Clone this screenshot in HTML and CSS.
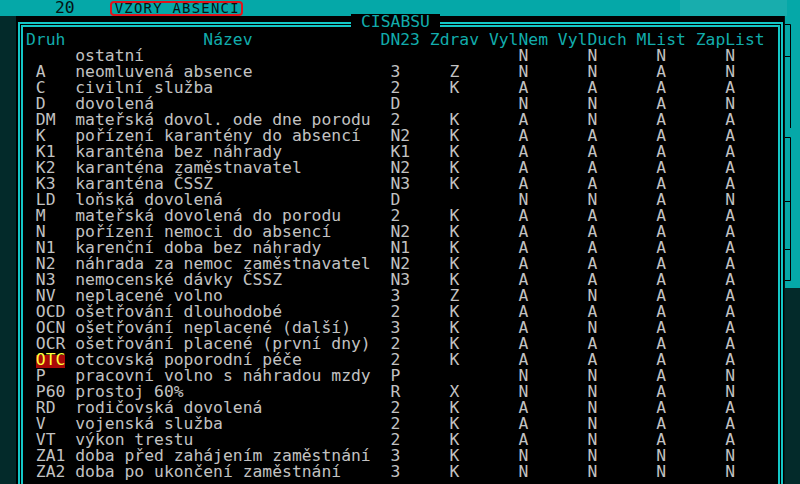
FILE: index.html
```html
<!DOCTYPE html>
<html lang="cs">
<head>
<meta charset="utf-8">
<title>VZORY ABSENCI</title>
<link rel="stylesheet" href="styles.css">
</head>
<body>
<div class="screen">
  <div class="topbar">
    <span class="num">20</span>
    <span class="title">VZORY ABSENCI</span>
    <span class="glare"></span>
  </div>
  <div class="main">
    <div class="leftstrip"></div>
    <div class="window">
      <div class="frame-outer">
        <div class="caption">CISABSU</div>
        <div class="frame-inner">
          <div class="head">
            <span>Druh</span><span>Název</span><span>DN23</span><span>Zdrav</span><span>VylNem</span><span>VylDuch</span><span>MList</span><span>ZapList</span>
          </div>
          <div class="row"><span></span><span></span><span>ostatní</span><span></span><span></span><span>N</span><span>N</span><span>N</span><span>N</span></div>
          <div class="row"><span></span><span>A</span><span>neomluvená absence</span><span>3</span><span>Z</span><span>N</span><span>N</span><span>A</span><span>N</span></div>
          <div class="row"><span></span><span>C</span><span>civilní služba</span><span>2</span><span>K</span><span>A</span><span>A</span><span>A</span><span>A</span></div>
          <div class="row"><span></span><span>D</span><span>dovolená</span><span>D</span><span></span><span>N</span><span>N</span><span>A</span><span>N</span></div>
          <div class="row"><span></span><span>DM</span><span>mateřská dovol. ode dne porodu</span><span>2</span><span>K</span><span>A</span><span>N</span><span>A</span><span>A</span></div>
          <div class="row"><span></span><span>K</span><span>pořízení karantény do absencí</span><span>N2</span><span>K</span><span>A</span><span>A</span><span>A</span><span>A</span></div>
          <div class="row"><span></span><span>K1</span><span>karanténa bez náhrady</span><span>K1</span><span>K</span><span>A</span><span>A</span><span>A</span><span>A</span></div>
          <div class="row"><span></span><span>K2</span><span>karanténa zaměstnavatel</span><span>N2</span><span>K</span><span>A</span><span>A</span><span>A</span><span>A</span></div>
          <div class="row"><span></span><span>K3</span><span>karanténa ČSSZ</span><span>N3</span><span>K</span><span>A</span><span>A</span><span>A</span><span>A</span></div>
          <div class="row"><span></span><span>LD</span><span>loňská dovolená</span><span>D</span><span></span><span>N</span><span>N</span><span>A</span><span>N</span></div>
          <div class="row"><span></span><span>M</span><span>mateřská dovolená do porodu</span><span>2</span><span>K</span><span>A</span><span>A</span><span>A</span><span>A</span></div>
          <div class="row"><span></span><span>N</span><span>pořízení nemoci do absencí</span><span>N2</span><span>K</span><span>A</span><span>A</span><span>A</span><span>A</span></div>
          <div class="row"><span></span><span>N1</span><span>karenční doba bez náhrady</span><span>N1</span><span>K</span><span>A</span><span>A</span><span>A</span><span>A</span></div>
          <div class="row"><span></span><span>N2</span><span>náhrada za nemoc zaměstnavatel</span><span>N2</span><span>K</span><span>A</span><span>A</span><span>A</span><span>A</span></div>
          <div class="row"><span></span><span>N3</span><span>nemocenské dávky ČSSZ</span><span>N3</span><span>K</span><span>A</span><span>A</span><span>A</span><span>A</span></div>
          <div class="row"><span></span><span>NV</span><span>neplacené volno</span><span>3</span><span>Z</span><span>A</span><span>N</span><span>A</span><span>A</span></div>
          <div class="row"><span></span><span>OCD</span><span>ošetřování dlouhodobé</span><span>2</span><span>K</span><span>A</span><span>A</span><span>A</span><span>A</span></div>
          <div class="row"><span></span><span>OCN</span><span>ošetřování neplacené (další)</span><span>3</span><span>K</span><span>A</span><span>N</span><span>A</span><span>A</span></div>
          <div class="row"><span></span><span>OCR</span><span>ošetřování placené (první dny)</span><span>2</span><span>K</span><span>A</span><span>A</span><span>A</span><span>A</span></div>
          <div class="row"><span></span><span><span class="hl">OTC</span></span><span>otcovská poporodní péče</span><span>2</span><span>K</span><span>A</span><span>A</span><span>A</span><span>A</span></div>
          <div class="row"><span></span><span>P</span><span>pracovní volno s náhradou mzdy</span><span>P</span><span></span><span>N</span><span>N</span><span>A</span><span>N</span></div>
          <div class="row"><span></span><span>P60</span><span>prostoj 60%</span><span>R</span><span>X</span><span>N</span><span>N</span><span>A</span><span>N</span></div>
          <div class="row"><span></span><span>RD</span><span>rodičovská dovolená</span><span>2</span><span>K</span><span>A</span><span>N</span><span>A</span><span>A</span></div>
          <div class="row"><span></span><span>V</span><span>vojenská služba</span><span>2</span><span>K</span><span>A</span><span>N</span><span>A</span><span>A</span></div>
          <div class="row"><span></span><span>VT</span><span>výkon trestu</span><span>2</span><span>K</span><span>A</span><span>N</span><span>A</span><span>A</span></div>
          <div class="row"><span></span><span>ZA1</span><span>doba před zahájením zaměstnání</span><span>3</span><span>K</span><span>N</span><span>N</span><span>N</span><span>N</span></div>
          <div class="row"><span></span><span>ZA2</span><span>doba po ukončení zaměstnání</span><span>3</span><span>K</span><span>N</span><span>N</span><span>N</span><span>N</span></div>
        </div>
      </div>
    </div>
    <div class="scrollbar">
      <svg class="thumb" width="16" height="272" viewBox="0 0 16 272">
        <path d="M0 8.5H5.5V112 M0 40.5H5.5 M0 121.5H5.5V264.5H0 M0 185.5H5.5 M0 233.5H5.5" fill="none" stroke="#000" stroke-width="1"/>
      </svg>
    </div>
  </div>
</div>
</body>
</html>
```

FILE: styles.css
```css
html, body {
  margin: 0;
  padding: 0;
  background: #000;
}

.screen {
  width: 800px;
  height: 484px;
  overflow: hidden;
  display: flex;
  flex-direction: column;
  font-family: "DejaVu Sans Mono", monospace;
  font-size: 16.38px;
  line-height: 16px;
  background: #000;
}

.topbar {
  height: 16px;
  flex: none;
  display: flex;
  align-items: flex-start;
  background: #05a8a8;
  color: #041414;
}

.num {
  margin-left: 55px;
  line-height: 16px;
  height: 16px;
}

.title {
  margin-left: 35px;
  margin-top: 1px;
  border: 2px solid #e0141c;
  border-radius: 4px;
  padding: 0 1px 0 3px;
  font-size: 14px;
  letter-spacing: 1.2px;
  line-height: 11px;
  height: 11px;
}

.glare {
  margin-left: auto;
  margin-right: 13px;
  width: 107px;
  height: 16px;
  background: #18adad;
}

.main {
  flex: 1;
  display: flex;
  min-height: 0;
}

.leftstrip {
  width: 16px;
  flex: none;
  background: #032a2a;
}

.window {
  flex: 1;
  background: #000;
  padding: 6px 1px 0 2px;
  min-width: 0;
}

.frame-outer {
  position: relative;
  border: 2px solid #14c6c6;
  border-bottom: none;
  padding: 1px 1px 0;
  height: 100%;
  box-sizing: border-box;
}

.caption {
  position: absolute;
  top: -10px;
  left: 331px;
  padding: 0 10px;
  background: #000;
  color: #12acac;
}

.frame-inner {
  border: 2px solid #14c6c6;
  border-bottom: none;
  height: 100%;
  box-sizing: border-box;
  padding: 5px 0 0 3px;
}

.head {
  display: grid;
  grid-template-columns: 18ch 18ch 5ch 6ch 7ch 8ch 6ch auto;
  color: #12acac;
  white-space: pre;
  height: 16px;
}

.row {
  display: grid;
  grid-template-columns: 1ch 4ch 32ch 6ch 7ch 7ch 7ch 7ch auto;
  color: #c2c2c2;
  white-space: pre;
  height: 16px;
}

.hl {
  display: inline-block;
  color: #ffff3c;
  background: linear-gradient(to bottom, transparent 3px, #a80808 3px, #a80808 16px);
}

.scrollbar {
  width: 16px;
  flex: none;
  background: linear-gradient(to bottom, #05a8a8 0, #05a8a8 272px, #032a2a 272px);
  border-left: 1px solid #021818;
  box-sizing: border-box;
}

.thumb {
  display: block;
}
```
